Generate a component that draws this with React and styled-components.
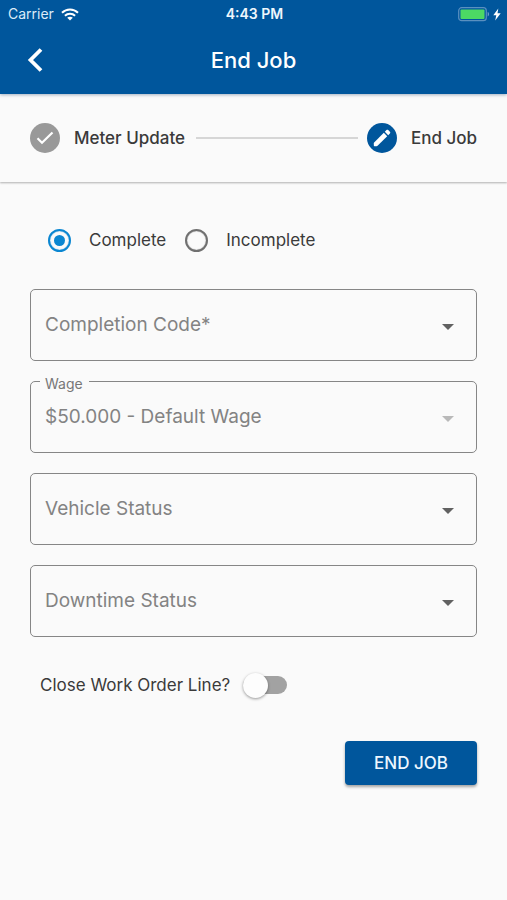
import React, { useState } from "react";
import styled, { createGlobalStyle } from "styled-components";

const GlobalStyle = createGlobalStyle`
  * { box-sizing: border-box; }
  body {
    margin: 0;
    background: #fafafa;
    color: #3a3a3a;
    font-family: Inter, "Liberation Sans", sans-serif;
  }
  button, select, input { font: inherit; }
`;

const Page = styled.div`
  min-height: 100vh;
  background: #fafafa;
`;

const Header = styled.header`
  position: relative;
  background: #00569c;
  color: #fff;
  box-shadow: 0 1px 3px rgba(0, 40, 90, 0.35);
`;

const StatusBar = styled.div`
  display: grid;
  grid-template-columns: 1fr auto 1fr;
  align-items: center;
  height: 28px;
  padding: 0 6px 0 8px;
  font-size: 14px;
  line-height: 20px;
`;

const StatusGroup = styled.div`
  display: flex;
  align-items: center;
  justify-content: ${(p) => (p.$end ? "flex-end" : "flex-start")};
  gap: ${(p) => (p.$end ? "3px" : "7px")};
  color: #dcebf8;
`;

const Clock = styled.time`
  font-size: 14px;
  font-weight: 600;
  color: #eef6fd;
`;

const TitleBar = styled.div`
  display: grid;
  grid-template-columns: 48px 1fr 48px;
  align-items: center;
  height: 66px;
  padding: 0 12px 2px;
`;

const BackButton = styled.button`
  display: flex;
  align-items: center;
  justify-content: center;
  height: 48px;
  padding: 0;
  border: 0;
  background: none;
  color: inherit;
  cursor: pointer;
`;

const Title = styled.h1`
  margin: 0;
  font-size: 22px;
  line-height: 32px;
  font-weight: 500;
  text-align: center;
`;

const Stepper = styled.ol`
  display: flex;
  align-items: center;
  height: 88px;
  margin: 0;
  padding: 0 30px;
  list-style: none;
  box-shadow: 0 1px 2px rgba(0, 0, 0, 0.3);
`;

const Step = styled.li`
  display: flex;
  align-items: center;
  gap: 14px;
  font-size: 17px;
  line-height: 24px;
  font-weight: 500;
  color: #3a3a3a;
  white-space: nowrap;
`;

const StepBadge = styled.span`
  display: flex;
  align-items: center;
  justify-content: center;
  width: 30px;
  height: 30px;
  border-radius: 50%;
  background: ${(p) => (p.$active ? "#00569c" : "#999")};
`;

const StepLine = styled.li`
  flex: 1;
  height: 2px;
  margin: 0 9px 0 11px;
  background: #d6d6d6;
`;

const Form = styled.form`
  padding: 46px 30px 30px;
`;

const RadioGroup = styled.div`
  display: flex;
  gap: 19px;
  padding-left: 18px;
`;

const RadioLabel = styled.label`
  display: flex;
  align-items: center;
  gap: 18px;
  font-size: 17px;
  line-height: 24px;
  cursor: pointer;
`;

const Radio = styled.input`
  appearance: none;
  display: grid;
  place-content: center;
  width: 23px;
  height: 23px;
  margin: 0;
  border: 2px solid #707070;
  border-radius: 50%;
  box-shadow: inset 0 0 1px #707070;

  &::before {
    content: "";
    width: 11px;
    height: 11px;
    border-radius: 50%;
  }
  &:checked {
    border-color: #0a86d1;
    box-shadow: inset 0 0 1px #0a86d1;
  }
  &:checked::before { background: #0a86d1; }
`;

const Fields = styled.div`
  display: grid;
  gap: 20px;
  margin-top: 37px;
`;

const Field = styled.div`
  position: relative;
  display: grid;
  align-items: center;
`;

const Select = styled.select`
  appearance: none;
  grid-area: 1 / 1;
  width: 100%;
  height: 72px;
  padding: 0 48px 2px 14px;
  border: 1px solid #868686;
  border-radius: 5px;
  outline: 0;
  background: transparent;
  color: #838383;
  font-size: 19px;
  opacity: 1;

  &:focus-visible { border-color: #00569c; }
`;

const Arrow = styled.svg`
  grid-area: 1 / 1;
  justify-self: end;
  margin: 4px 23px 0 0;
  fill: ${(p) => (p.$muted ? "#b9b9b9" : "#616161")};
  pointer-events: none;
`;

const FloatingLabel = styled.label`
  position: absolute;
  top: -6px;
  left: 10px;
  padding: 0 6px 0 5px;
  background: #fafafa;
  color: #777;
  font-size: 14px;
  line-height: 18px;
`;

const SwitchRow = styled.label`
  display: flex;
  align-items: center;
  gap: 13px;
  width: fit-content;
  margin-top: 35px;
  padding-left: 10px;
  font-size: 17px;
  line-height: 26px;
  cursor: pointer;
`;

const Switch = styled.input`
  appearance: none;
  display: flex;
  align-items: center;
  width: 44px;
  height: 18px;
  margin: 0;
  border-radius: 9px;
  background: ${(p) => (p.checked ? "#7fb2dc" : "#a2a2a2")};
  cursor: pointer;

  &::before {
    content: "";
    width: 25px;
    height: 25px;
    margin-left: ${(p) => (p.checked ? "19px" : "0")};
    border-radius: 50%;
    background: ${(p) => (p.checked ? "#00569c" : "#fdfdfd")};
    box-shadow: 0 1px 3px rgba(0, 0, 0, 0.4);
  }
`;

const Actions = styled.div`
  display: flex;
  justify-content: flex-end;
  margin-top: 43px;
`;

const SubmitButton = styled.button`
  height: 44px;
  padding: 0 29px;
  border: 0;
  border-radius: 4px;
  background: #00569c;
  color: #eef7ff;
  font-size: 17px;
  font-weight: 500;
  box-shadow: 0 2px 3px rgba(0, 0, 0, 0.35);
  cursor: pointer;
`;

function WifiIcon() {
  return (
    <svg width="18" height="13" viewBox="0 0 18 13" fill="none" stroke="#fff" strokeWidth="2" aria-hidden="true">
      <path d="M1 4.7C5.5.4 12.5.4 17 4.7" />
      <path d="M3.9 7.7C6.8 5 11.2 5 14.1 7.7" />
      <path d="M9 12.6 6.2 9.8C7.8 8.4 10.2 8.4 11.8 9.8Z" fill="#fff" stroke="none" />
    </svg>
  );
}

function BatteryIcon() {
  return (
    <svg width="32" height="15" viewBox="0 0 32 15" aria-hidden="true">
      <rect x="0.7" y="0.7" width="27.6" height="13" rx="3" fill="none" stroke="#5a90c0" strokeWidth="1.2" />
      <rect x="2.5" y="2.5" width="24" height="9.4" rx="1" fill="#4cd964" />
      <path d="M29.7 5v4.4c1.8-.6 1.8-3.8 0-4.4Z" fill="#6e9fc9" />
    </svg>
  );
}

function BoltIcon() {
  return (
    <svg width="8" height="13" viewBox="0 0 8 13" fill="#fff" aria-hidden="true">
      <path d="M5.3.5.3 7.3h3L2.2 12.5 7.7 5.3H4.5Z" />
    </svg>
  );
}

function BackIcon() {
  return (
    <svg width="20" height="26" viewBox="0 0 20 26" fill="none" stroke="#fff" strokeWidth="3.8" aria-hidden="true">
      <path d="M15 2.5 4.5 13 15 23.5" />
    </svg>
  );
}

function CheckIcon() {
  return (
    <svg width="18" height="14" viewBox="0 0 18 14" fill="none" stroke="#fff" strokeWidth="2.2" aria-hidden="true">
      <path d="M1.5 7.3 6 11.8 16.5 1.5" />
    </svg>
  );
}

function PencilIcon() {
  return (
    <svg width="18" height="18" viewBox="0 0 18 18" fill="#fff" aria-hidden="true">
      <path d="M1.4 13.2 10.8 3.8 14.2 7.2 4.8 16.6C4.400 17 4 17.200 3.500 17.200H1.800C1.200 17.200.8 16.800.8 16.200V14.500C.8 14 1 13.600 1.400 13.200Z" />
      <path d="M11.8 2.8 13.5 1.1c.5-.5 1.200-.5 1.700 0l1.700 1.700c.5.5.5 1.200 0 1.700L15.200 6.200Z" />
    </svg>
  );
}

function SelectField({ id, text, label, disabled }) {
  return (
    <Field>
      <Select id={id} name={id} aria-label={label ? undefined : text} disabled={disabled}>
        <option>{text}</option>
      </Select>
      {label && <FloatingLabel htmlFor={id}>{label}</FloatingLabel>}
      <Arrow $muted={disabled} width="12" height="6" viewBox="0 0 12 6" aria-hidden="true">
        <path d="M0 0h12L6 6Z" />
      </Arrow>
    </Field>
  );
}

export default function App() {
  const [status, setStatus] = useState("Complete");
  const [closeLine, setCloseLine] = useState(false);

  return (
    <Page>
      <GlobalStyle />
      <Header>
        <StatusBar>
          <StatusGroup>
            <span>Carrier</span>
            <WifiIcon />
          </StatusGroup>
          <Clock>4:43 PM</Clock>
          <StatusGroup $end>
            <BatteryIcon />
            <BoltIcon />
          </StatusGroup>
        </StatusBar>
        <TitleBar>
          <BackButton type="button" aria-label="Back">
            <BackIcon />
          </BackButton>
          <Title>End Job</Title>
        </TitleBar>
      </Header>
      <main>
        <Stepper>
          <Step>
            <StepBadge>
              <CheckIcon />
            </StepBadge>
            Meter Update
          </Step>
          <StepLine aria-hidden="true" />
          <Step aria-current="step">
            <StepBadge $active>
              <PencilIcon />
            </StepBadge>
            End Job
          </Step>
        </Stepper>
        <Form onSubmit={(e) => e.preventDefault()}>
          <RadioGroup role="radiogroup" aria-label="Job status">
            {["Complete", "Incomplete"].map((value) => (
              <RadioLabel key={value}>
                <Radio
                  type="radio"
                  name="status"
                  value={value}
                  checked={status === value}
                  onChange={() => setStatus(value)}
                />
                {value}
              </RadioLabel>
            ))}
          </RadioGroup>
          <Fields>
            <SelectField id="completion-code" text="Completion Code*" />
            <SelectField id="wage" label="Wage" text="$50.000 - Default Wage" disabled />
            <SelectField id="vehicle-status" text="Vehicle Status" />
            <SelectField id="downtime-status" text="Downtime Status" />
          </Fields>
          <SwitchRow>
            Close Work Order Line?
            <Switch
              type="checkbox"
              role="switch"
              checked={closeLine}
              onChange={(e) => setCloseLine(e.target.checked)}
            />
          </SwitchRow>
          <Actions>
            <SubmitButton type="submit">END JOB</SubmitButton>
          </Actions>
        </Form>
      </main>
    </Page>
  );
}
